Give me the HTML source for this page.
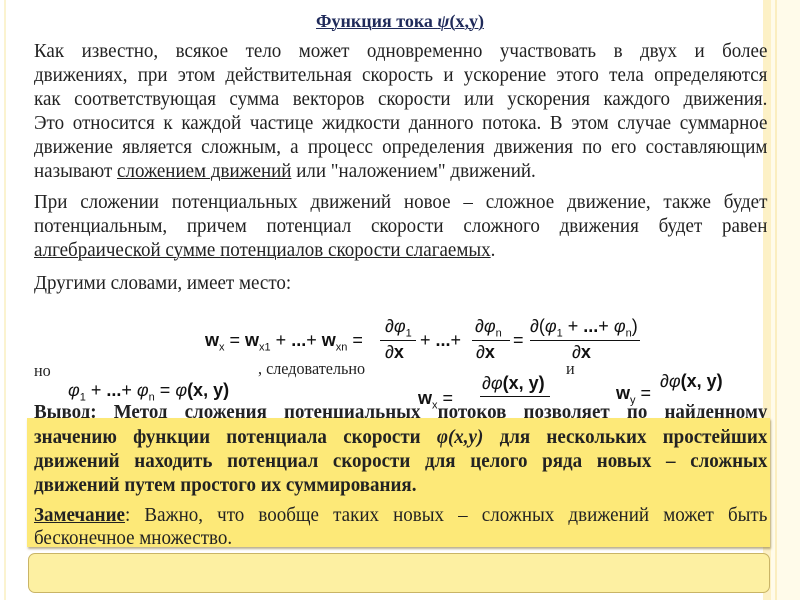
<!DOCTYPE html>
<html><head><meta charset="utf-8"><style>
*{margin:0;padding:0}
body{width:800px;height:600px;position:relative;background:#fff;overflow:hidden;font-family:"Liberation Serif",serif;color:#222}
.l{position:absolute;left:34px;width:772px;font-size:20px;line-height:22px;white-space:nowrap;text-align:justify;text-align-last:justify;transform:scaleX(0.95);transform-origin:0 0}
.n{text-align-last:left}
.s{position:absolute;font-family:"Liberation Sans",sans-serif;font-size:18px;white-space:nowrap;color:#111}
.b{font-weight:bold}
u{text-decoration-thickness:1px}
</style></head><body>
<div style="position:absolute;left:4px;top:0;width:2px;height:600px;background:#fbf3d0"></div>
<div style="position:absolute;left:763px;top:0;width:37px;height:600px;background:#fffbea"></div>
<div style="position:absolute;left:763px;top:0;width:8px;height:600px;background:#fdf1c6"></div>
<div style="position:absolute;left:775px;top:0;width:2px;height:600px;background:#fbeec0"></div>

<div style="position:absolute;left:0;width:800px;top:11px;text-align:center;font-size:18px;font-weight:bold;color:#1f2a5a"><u>Функция тока <i>ψ</i>(x,y)</u></div>

<div class="l" style="top:40px">Как известно, всякое тело может одновременно участвовать в двух и более</div>
<div class="l" style="top:64px">движениях, при этом действительная скорость и ускорение этого тела определяются</div>
<div class="l" style="top:88px">как соответствующая сумма векторов скорости или ускорения каждого движения.</div>
<div class="l" style="top:112px">Это относится к каждой частице жидкости данного потока. В этом случае суммарное</div>
<div class="l" style="top:136px">движение является сложным, а процесс определения движения по его составляющим</div>
<div class="l n" style="top:160px">называют <u>сложением движений</u> или "наложением" движений.</div>

<div class="l" style="top:191px">При сложении потенциальных движений новое – сложное движение, также будет</div>
<div class="l" style="top:215px">потенциальным, причем потенциал скорости сложного движения будет равен</div>
<div class="l n" style="top:239px"><u>алгебраической сумме потенциалов скорости слагаемых</u>.</div>
<div class="l n" style="top:272px">Другими словами, имеет место:</div>

<div class="s" style="left:205px;top:330px"><b>w</b><sub style="font-size:11px">x</sub> = <b>w</b><sub style="font-size:11px">x1</sub> + <b>...</b>+ <b>w</b><sub style="font-size:11px">xn</sub> =</div>
<div class="s" style="left:385px;top:316px">∂<i>φ</i><sub style="font-size:11px">1</sub></div>
<div style="position:absolute;left:380px;top:340px;width:36px;height:1px;background:#111"></div>
<div class="s" style="left:385px;top:342px">∂<b>x</b></div>
<div class="s" style="left:420px;top:330px">+ <b>...</b>+</div>
<div class="s" style="left:475px;top:316px">∂<i>φ</i><sub style="font-size:11px">n</sub></div>
<div style="position:absolute;left:472px;top:340px;width:38px;height:1px;background:#111"></div>
<div class="s" style="left:476px;top:342px">∂<b>x</b></div>
<div class="s" style="left:513px;top:330px">=</div>
<div class="s" style="left:530px;top:316px">∂(<i>φ</i><sub style="font-size:11px">1</sub> + <b>...</b>+ <i>φ</i><sub style="font-size:11px">n</sub>)</div>
<div style="position:absolute;left:530px;top:340px;width:110px;height:1px;background:#111"></div>
<div class="s" style="left:572px;top:342px">∂<b>x</b></div>

<div class="l n" style="top:360px;font-size:17px">но</div>
<div class="l n" style="left:258px;top:358px;font-size:17px">, следовательно</div>
<div class="l n" style="left:566px;top:358px;font-size:17px">и</div>
<div class="s" style="left:68px;top:380px"><i>φ</i><sub style="font-size:11px">1</sub> + <b>...</b>+ <i>φ</i><sub style="font-size:11px">n</sub> = <i>φ</i><b>(x, y)</b></div>
<div class="s" style="left:418px;top:388px"><b>w</b><sub style="font-size:11px">x</sub> =</div>
<div class="s" style="left:482px;top:373px">∂<i>φ</i><b>(x, y)</b></div>
<div style="position:absolute;left:480px;top:396px;width:70px;height:1px;background:#111"></div>
<div class="s" style="left:616px;top:383px"><b>w</b><sub style="font-size:11px">y</sub> =</div>
<div class="s" style="left:660px;top:371px">∂<i>φ</i><b>(x, y)</b></div>

<div class="l b" style="top:401px"><u>Вывод:</u> Метод сложения потенциальных потоков позволяет по найденному</div>

<div style="position:absolute;left:27px;top:418px;width:743px;height:129px;background:#fde978;box-shadow:1px 2px 2px rgba(120,100,40,.5)"></div>
<div class="l b" style="top:426px">значению функции потенциала скорости <i>φ(x,y)</i> для нескольких простейших</div>
<div class="l b" style="top:450px">движений находить потенциал скорости для целого ряда новых – сложных</div>
<div class="l b n" style="top:474px">движений путем простого их суммирования.</div>
<div class="l" style="top:504px"><u><b>Замечание</b></u>: Важно, что вообще таких новых – сложных движений может быть</div>
<div class="l n" style="top:527px">бесконечное множество.</div>

<div style="position:absolute;left:28px;top:553px;width:742px;height:40px;background:#fdf0a2;border:1px solid #c9b466;border-radius:7px;box-sizing:border-box"></div>
</body></html>
